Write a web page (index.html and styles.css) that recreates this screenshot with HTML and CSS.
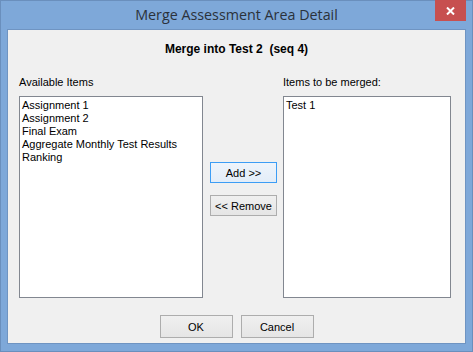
FILE: index.html
```html
<!DOCTYPE html>
<html>
<head>
<meta charset="utf-8">
<link rel="stylesheet" href="styles.css">
</head>
<body>
<div class="window">
  <div class="titlebar">
    <span class="title">Merge Assessment Area Detail</span>
    <div class="close">
      <svg width="9" height="8" viewBox="0 0 9 8"><path d="M1 0.5 L8 7.5 M8 0.5 L1 7.5" stroke="#fff" stroke-width="2" fill="none"/></svg>
    </div>
  </div>
  <div class="client">
    <div class="heading">Merge into Test 2&nbsp; (seq 4)</div>
    <div class="main">
      <div class="col col-left">
        <div class="label">Available Items</div>
        <div class="list">
          <div class="item">Assignment 1</div>
          <div class="item">Assignment 2</div>
          <div class="item">Final Exam</div>
          <div class="item">Aggregate Monthly Test Results</div>
          <div class="item">Ranking</div>
        </div>
      </div>
      <div class="col col-mid">
        <button class="btn btn-focus">Add &gt;&gt;</button>
        <button class="btn">&lt;&lt; Remove</button>
      </div>
      <div class="col col-right">
        <div class="label">Items to be merged:</div>
        <div class="list">
          <div class="item">Test 1</div>
        </div>
      </div>
    </div>
    <div class="actions">
      <button class="btn btn-big">OK</button>
      <button class="btn btn-big">Cancel</button>
    </div>
  </div>
</div>
</body>
</html>
```
FILE: styles.css
```css
html, body {
  margin: 0;
  padding: 0;
  background: #7ba7d8;
}
.window {
  position: relative;
  box-sizing: border-box;
  width: 473px;
  height: 352px;
  background: #7ea8d9;
  border: 1px solid #6a8fbd;
  display: flex;
  flex-direction: column;
  padding: 0 6px 7px 6px;
  font-family: "Liberation Sans", Arial, sans-serif;
  font-size: 11px;
  color: #000;
}
.titlebar {
  height: 28px;
  display: flex;
  align-items: center;
  justify-content: center;
}
.title {
  font-family: "Open Sans", "Noto Sans", sans-serif;
  font-size: 14.3px;
  color: #2b323b;
  margin-top: -1px;
}
.close {
  position: absolute;
  left: 434px;
  top: -1px;
  width: 31px;
  height: 21px;
  background: #c75050;
  display: flex;
  align-items: center;
  justify-content: center;
}
.close svg { display: block; }
.client {
  flex: 1;
  background: #f0f0f0;
  border: 1px solid #6f94c2;
  display: flex;
  flex-direction: column;
  padding: 13px 14px 5px 11px;
}
.heading {
  font-weight: bold;
  font-size: 12px;
  text-align: center;
  line-height: 13px;
  height: 13px;
  padding-left: 3px;
}
.main {
  display: flex;
  gap: 7px;
  margin-top: 20px;
}
.col-left { width: 184px; }
.col-right { width: 168px; margin-left: -1px; }
.col-mid {
  width: 67px;
  display: flex;
  flex-direction: column;
  gap: 12px;
  padding-top: 86px;
}
.label {
  line-height: 13px;
  height: 13px;
  margin-bottom: 7px;
}
.list {
  box-sizing: border-box;
  height: 202px;
  background: #fff;
  border: 1px solid #828790;
  padding: 2px 2px;
}
.item {
  line-height: 13px;
  height: 13px;
  white-space: nowrap;
}
.btn {
  box-sizing: border-box;
  font-family: "Liberation Sans", Arial, sans-serif;
  font-size: 11px;
  color: #000;
  width: 67px;
  height: 21px;
  padding: 0;
  border: 1px solid #adadad;
  background: linear-gradient(#f0f0f0, #e5e5e5);
  border-radius: 0;
}
.btn-focus {
  border-color: #3c9df5;
  background: linear-gradient(#eef4fb, #e3edf8);
}
.actions {
  display: flex;
  justify-content: center;
  gap: 8px;
  margin-top: 17px;
  padding-left: 3px;
}
.btn-big {
  width: 73px;
  height: 23px;
}
```
